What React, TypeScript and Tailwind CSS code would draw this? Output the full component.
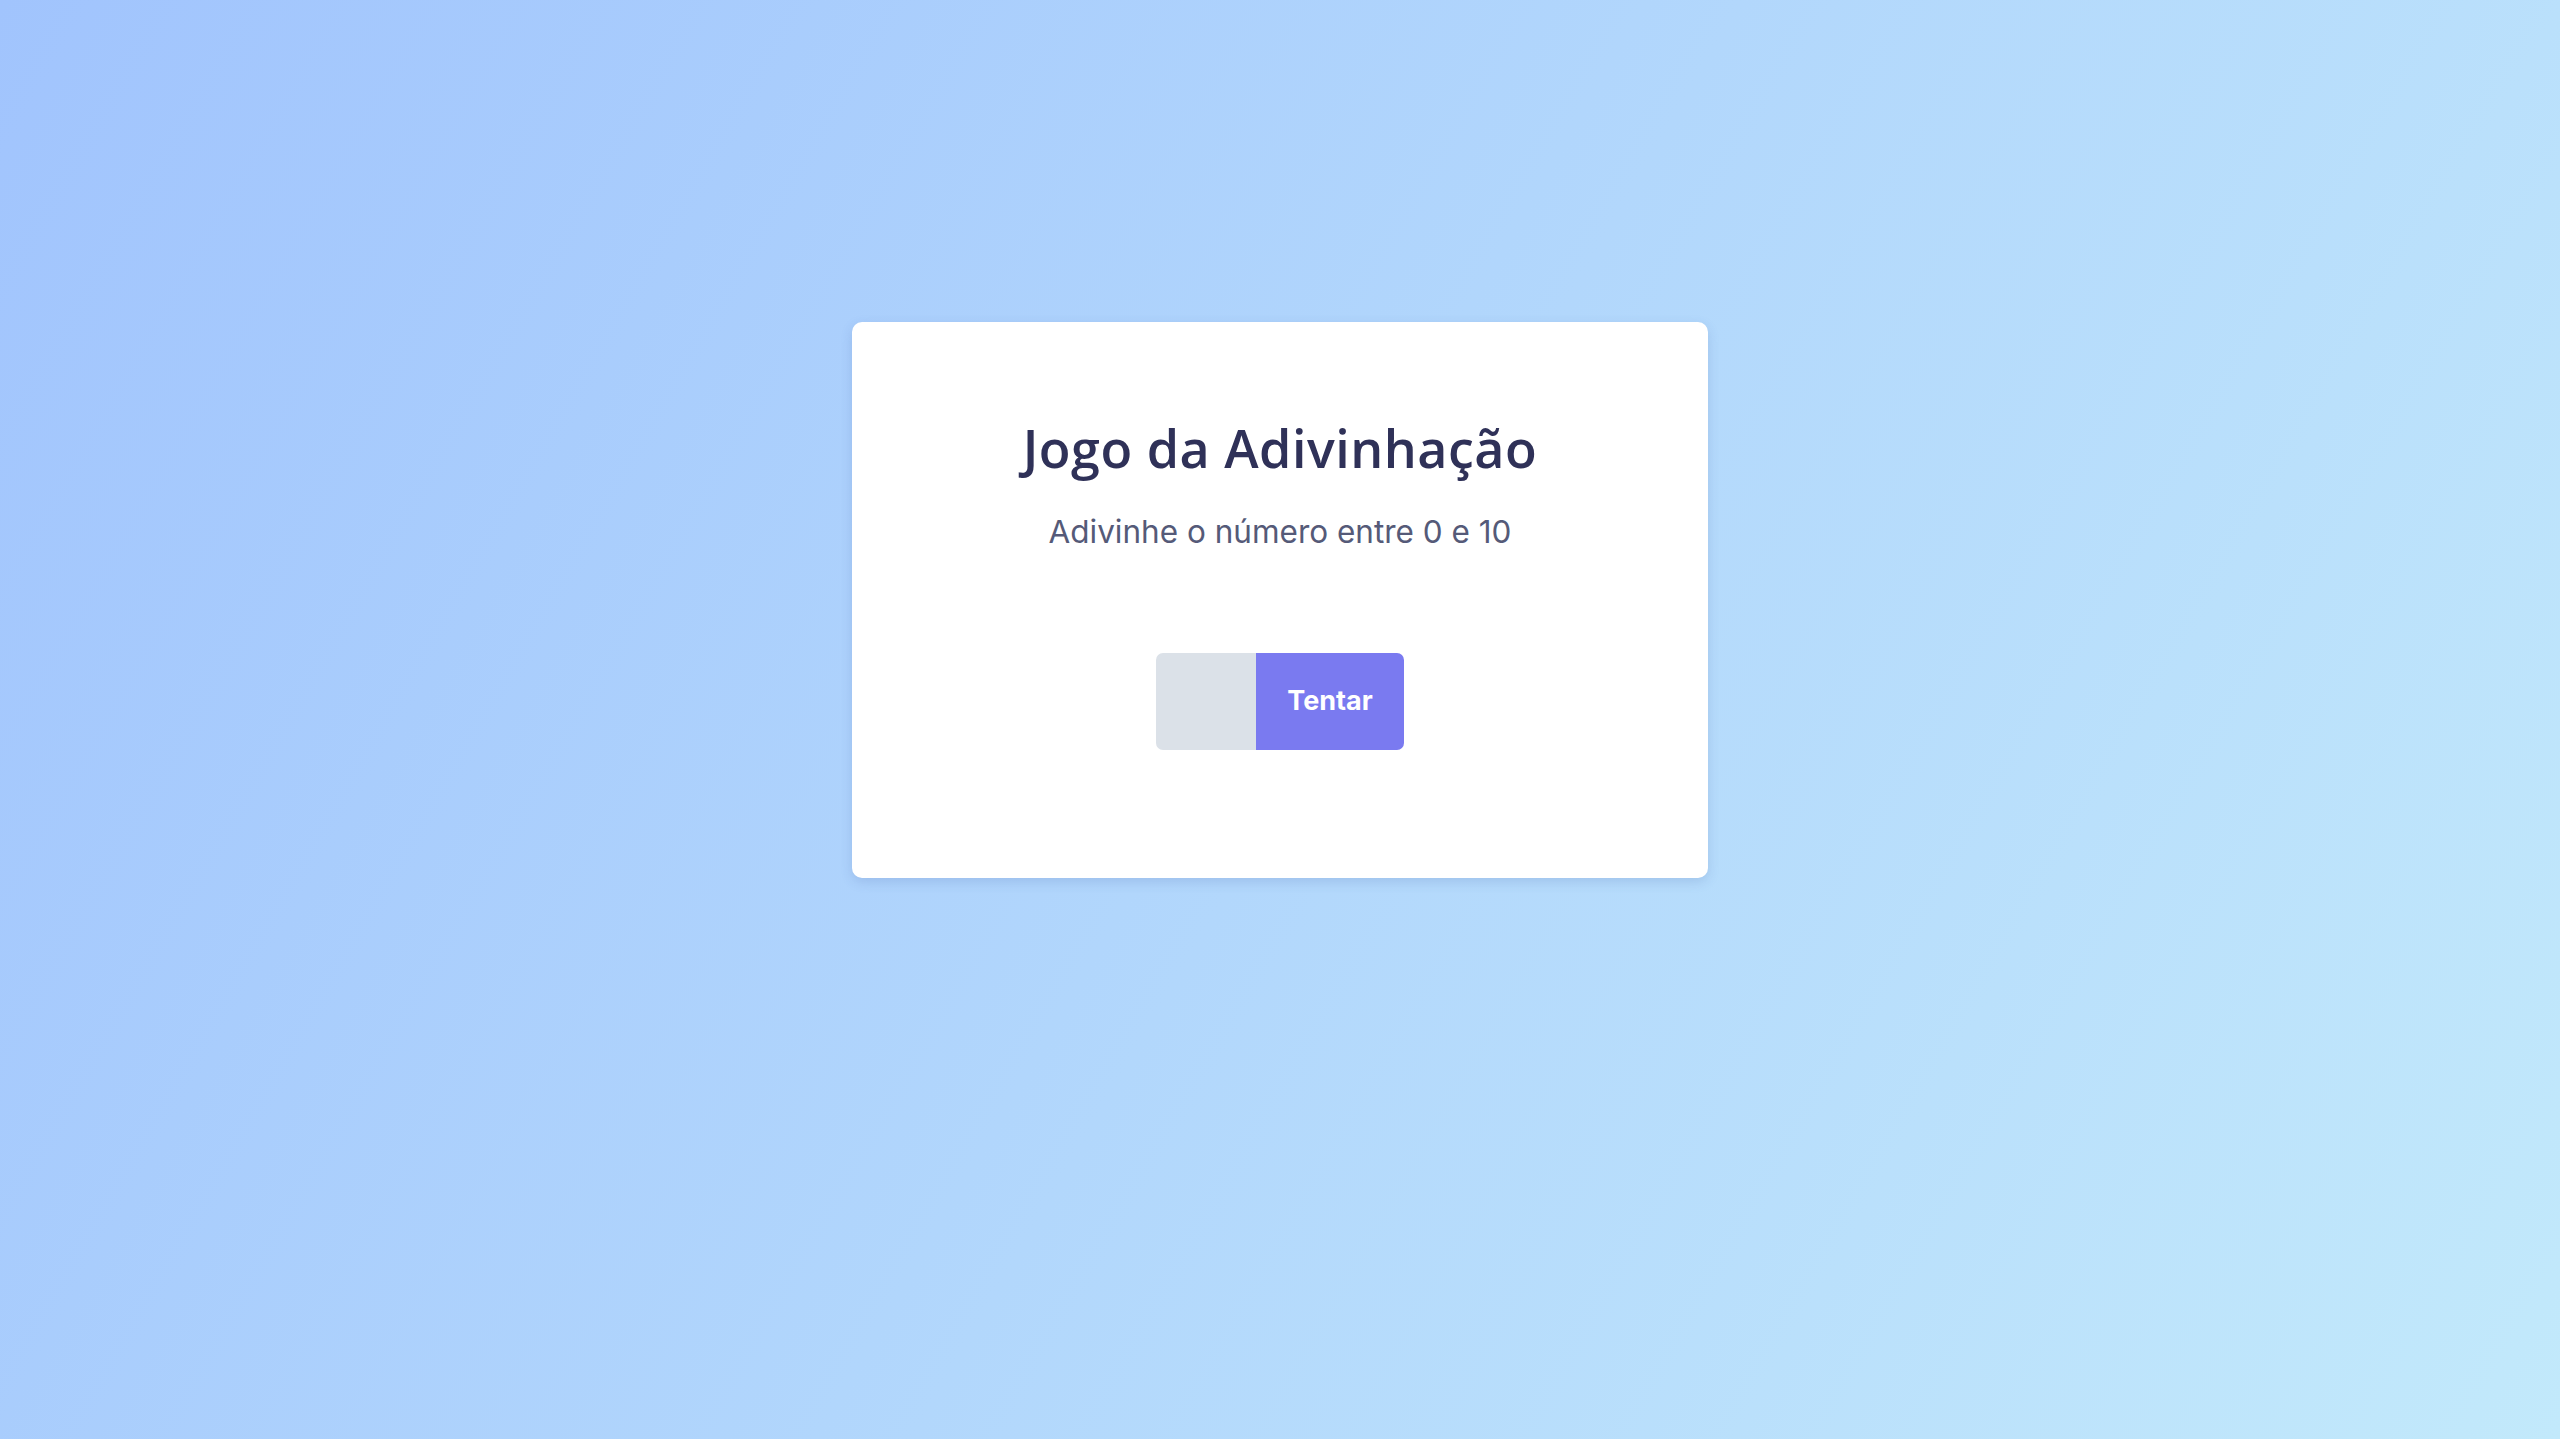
import React from "react";

export default function App() {
  return (
    <div className="min-h-[1439px] w-full bg-[linear-gradient(120deg,#a1c4fd_0%,#c2e9fb_100%)] flex justify-center pt-[322px]">
      <div className="w-[856px] h-[556px] bg-white rounded-[10px] shadow-[0_4px_12px_rgba(60,90,160,0.18)] flex flex-col items-center">
        <h1 className="mt-[94px] text-[52px] leading-[64px] font-semibold text-[#2f3158] tracking-[0.5px] [font-family:'Open_Sans',sans-serif]">
          Jogo da Adivinhação
        </h1>
        <p className="mt-[32px] text-[31.5px] leading-[40px] text-[#555a78] [font-family:Inter,sans-serif]">
          Adivinhe o número entre 0 e 10
        </p>
        <div className="mt-[101px] flex h-[97px] rounded-[7px] overflow-hidden">
          <input
            type="text"
            className="w-[100px] h-full bg-[#dbe1e8] border-0 outline-none px-3 text-[26px]"
          />
          <button className="w-[148px] h-full bg-[#7a7af0] text-white text-[27px] font-bold [font-family:Inter,sans-serif]">
            Tentar
          </button>
        </div>
      </div>
    </div>
  );
}
